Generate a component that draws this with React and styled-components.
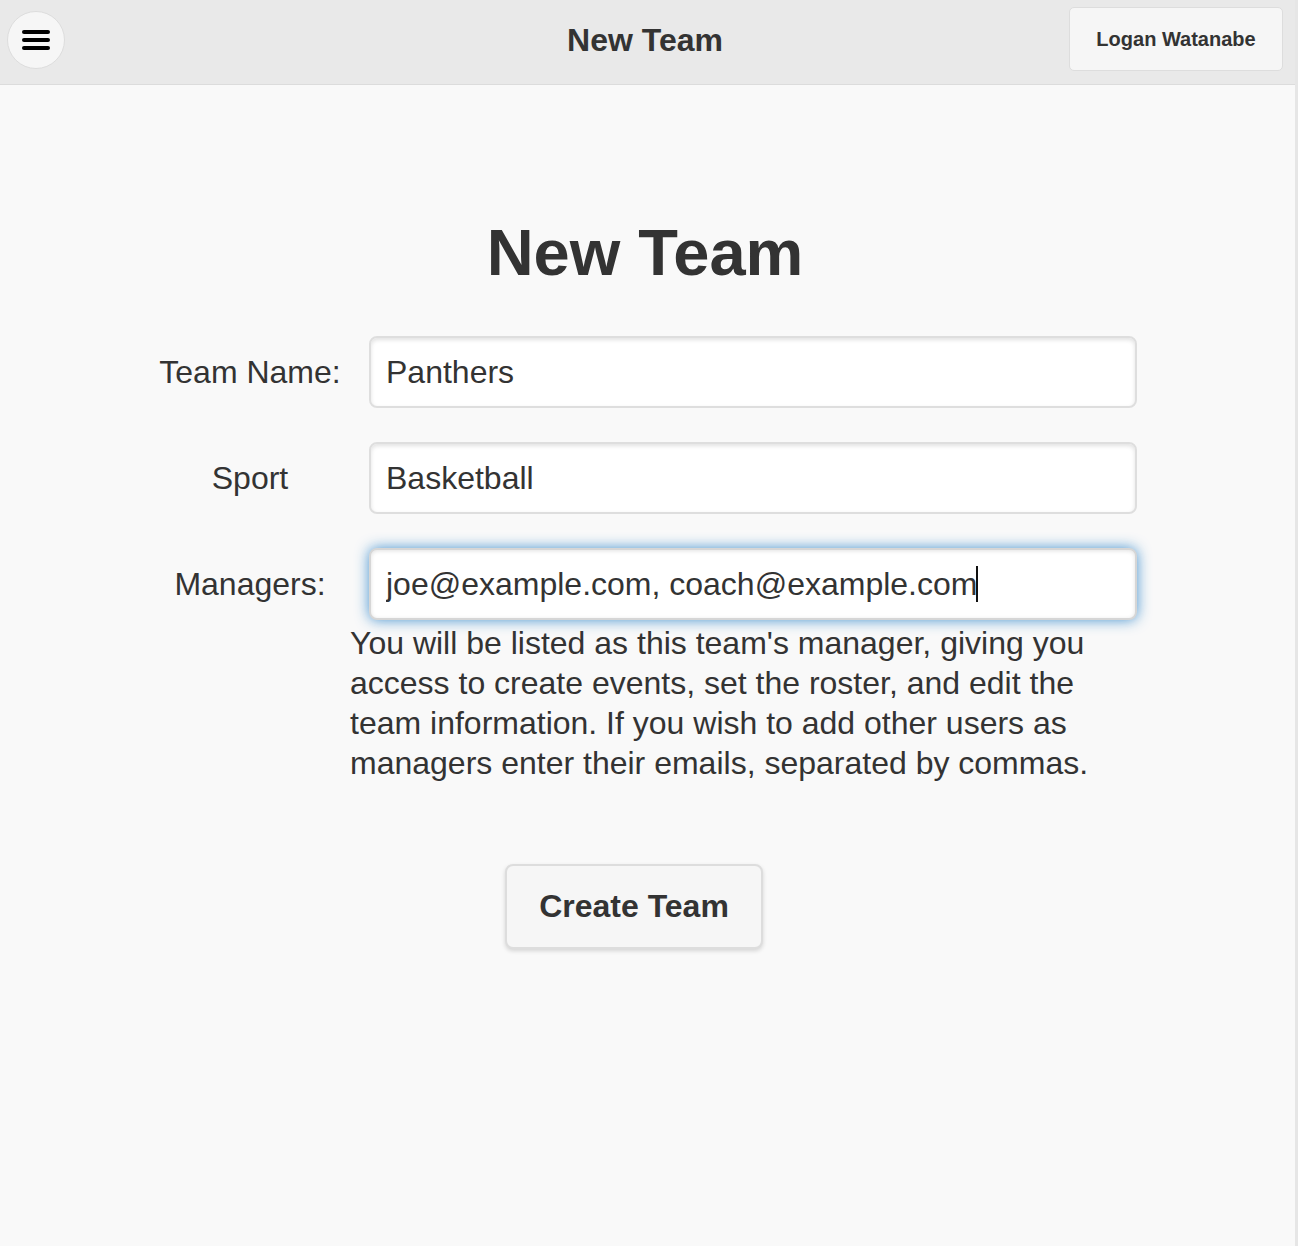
import styled, { createGlobalStyle } from "styled-components";

const GlobalStyle = createGlobalStyle`
  html, body {
    margin: 0;
    padding: 0;
    background: #f9f9f9;
  }
  body {
    font-family: "Liberation Sans", Arial, Helvetica, sans-serif;
    color: #333;
  }
`;

function App() {
  return (
    <>
      <GlobalStyle />
      <Page>
        <Header>
          <MenuButton aria-label="menu">
            <svg width="28" height="20" viewBox="0 0 28 20">
              <rect x="0" y="0" width="28" height="4" rx="2" fill="#000" />
              <rect x="0" y="8" width="28" height="4" rx="2" fill="#000" />
              <rect x="0" y="16" width="28" height="4" rx="2" fill="#000" />
            </svg>
          </MenuButton>
          <HeaderTitle>New Team</HeaderTitle>
          <UserButton>Logan Watanabe</UserButton>
        </Header>

        <Content>
          <Title>New Team</Title>
          <Form>
            <Field>
              <Label>Team Name:</Label>
              <Input defaultValue="Panthers" />
            </Field>
            <Field>
              <Label>Sport</Label>
              <Input defaultValue="Basketball" />
            </Field>
            <Field>
              <Label>Managers:</Label>
              <InputColumn>
                <Input focused defaultValue="joe@example.com, coach@example.com" />
                <Caret />
                <Help>
                  You will be listed as this team's manager, giving you access
                  to create events, set the roster, and edit the team
                  information. If you wish to add other users as managers enter
                  their emails, separated by commas.
                </Help>
              </InputColumn>
            </Field>
          </Form>
          <SubmitButton>Create Team</SubmitButton>
        </Content>
      </Page>
    </>
  );
}

export default App;

// page frame
const Page = styled.div`
  width: 1295px;
  min-height: 1246px;
  border-right: 3px solid #e6e6e6;
  background: #f9f9f9;
`;

// top bar
const Header = styled.header`
  height: 84px;
  background: #e9e9e9;
  border-bottom: 1px solid #dcdcdc;
  display: flex;
  align-items: center;
  justify-content: space-between;
  padding: 0 12px 0 7px;
  position: relative;
`;

const MenuButton = styled.button`
  width: 58px;
  height: 58px;
  border-radius: 50%;
  background: #f6f6f6;
  border: 1px solid #dddddd;
  display: flex;
  align-items: center;
  justify-content: center;
  padding: 0;
  margin-top: -4px;
`;

const HeaderTitle = styled.h2`
  position: absolute;
  left: 0;
  right: 5px;
  top: 21px;
  margin: 0;
  text-align: center;
  font-size: 32px;
  line-height: 38px;
  font-weight: bold;
  color: #333;
  pointer-events: none;
`;

const UserButton = styled.button`
  width: 214px;
  height: 64px;
  margin-top: -6px;
  background: #f6f6f6;
  border: 1px solid #dddddd;
  border-radius: 5px;
  font-family: inherit;
  font-size: 20px;
  font-weight: bold;
  color: #333;
`;

// body
const Content = styled.main`
  display: flex;
  flex-direction: column;
  align-items: flex-start;
  padding-top: 130px;
`;

const Title = styled.h1`
  align-self: center;
  margin: 0 0 45px -5px;
  font-size: 65px;
  line-height: 76px;
  font-weight: bold;
  color: #333;
`;

const Form = styled.div`
  width: 987px;
  margin-left: 150px;
  display: flex;
  flex-direction: column;
  gap: 34px;
`;

const Field = styled.div`
  display: grid;
  grid-template-columns: 200px 787px;
  align-items: start;
`;

const Label = styled.label`
  text-align: center;
  font-size: 32px;
  line-height: 72px;
  color: #333;
`;

const InputColumn = styled.div`
  display: flex;
  flex-direction: column;
  position: relative;
`;

const Input = styled.input.withConfig({
  shouldForwardProp: (p) => p !== "focused",
})`
  box-sizing: border-box;
  width: 768px;
  height: 72px;
  margin-left: 19px;
  padding: 0 15px;
  background: #fff;
  border: 2px solid ${(p) => (p.focused ? "#d6d6d6" : "#dedede")};
  border-radius: 8px;
  font-family: inherit;
  font-size: 32px;
  color: #333;
  outline: none;
  box-shadow: ${(p) =>
    p.focused
      ? "0 0 14px rgba(51,136,204,0.9), inset 0 1px 4px rgba(0,0,0,0.12)"
      : "inset 0 2px 4px rgba(0,0,0,0.12)"};
`;

// text cursor drawn over the focused field
const Caret = styled.span`
  position: absolute;
  left: 626px;
  top: 18px;
  width: 2px;
  height: 36px;
  background: #111;
`;

const Help = styled.p`
  margin: 3px 0 0;
  width: 787px;
  font-size: 32px;
  line-height: 40px;
  color: #333;
`;

const SubmitButton = styled.button`
  margin: 81px 0 0 505px;
  width: 258px;
  height: 85px;
  background: #f6f6f6;
  border: 2px solid #dddddd;
  border-radius: 8px;
  box-shadow: 0 2px 4px rgba(0, 0, 0, 0.15);
  font-family: inherit;
  font-size: 32px;
  font-weight: bold;
  color: #333;
`;
